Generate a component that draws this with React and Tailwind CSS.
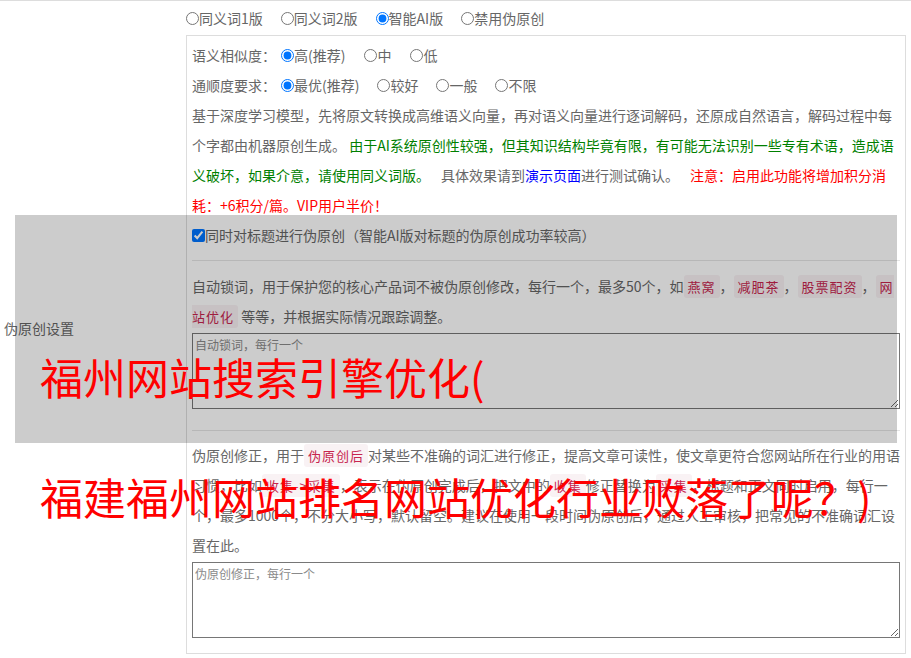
import React from "react";

const Code = ({ children }) => (
  <code className="rounded-[3px] bg-[#f9f2f4] px-[4px] py-[2px] text-[13px] leading-[14px] tracking-[1px] text-[#c7254e] font-['Noto_Sans_CJK_SC',sans-serif] [box-decoration-break:slice]">
    {children}
  </code>
);

const Radio = ({ name, label, checked }) => (
  <label className="flex items-center">
    <input
      type="radio"
      name={name}
      defaultChecked={checked}
      className="m-0 h-[13px] w-[13px]"
    />
    <span>{label}</span>
  </label>
);

const Gap = () => <span className="inline-block w-[11px]" />;

export default function App() {
  return (
    <div className="relative h-[658px] w-[911px] overflow-hidden bg-white font-['Noto_Sans_CJK_SC',sans-serif] text-[14px] text-[#666]">
      <div className="flex border-t border-[#ddd]">
        <div className="flex w-[186px] shrink-0 items-center pl-[4px] pb-[4px]">伪原创设置</div>
        <div className="flex-1 pb-[5px] pr-[5px] pt-[2px]">
          <div className="flex h-[30px] items-center gap-[18px]">
            <Radio name="ver" label="同义词1版" />
            <Radio name="ver" label="同义词2版" />
            <Radio name="ver" label="智能AI版" checked />
            <Radio name="ver" label="禁用伪原创" />
          </div>
          <div className="mt-[2px] border border-[#ddd] px-[5px] pb-[15px] pt-[4px] leading-[30px]">
            <div className="flex h-[30px] items-center">
              <span>语义相似度：</span>
              <div className="ml-[5px] flex items-center gap-[19px]">
                <Radio name="sim" label="高(推荐)" checked />
                <Radio name="sim" label="中" />
                <Radio name="sim" label="低" />
              </div>
            </div>
            <div className="flex h-[30px] items-center">
              <span>通顺度要求：</span>
              <div className="ml-[5px] flex items-center gap-[18px]">
                <Radio name="flu" label="最优(推荐)" checked />
                <Radio name="flu" label="较好" />
                <Radio name="flu" label="一般" />
                <Radio name="flu" label="不限" />
              </div>
            </div>
            <p>
              基于深度学习模型，先将原文转换成高维语义向量，再对语义向量进行逐词解码，还原成自然语言，解码过程中每个字都由机器原创生成。{" "}
              <span className="text-[#008000]">
                由于AI系统原创性较强，但其知识结构毕竟有限，有可能无法识别一些专有术语，造成语义破坏，如果介意，请使用同义词版。
              </span>
              <Gap />
              具体效果请到<span className="text-[#0000ff]">演示页面</span>进行测试确认。
              <Gap />
              <span className="text-[#ff0000]">注意：启用此功能将增加积分消耗：+6积分/篇。VIP用户半价！</span>
            </p>
            <label className="flex h-[30px] items-center">
              <input type="checkbox" defaultChecked className="m-0 h-[13px] w-[13px]" />
              <span>同时对标题进行伪原创（智能AI版对标题的伪原创成功率较高）</span>
            </label>
            <div className="my-[10px] h-px bg-[#e5e5e5]" />
            <p>
              自动锁词，用于保护您的核心产品词不被伪原创修改，每行一个，最多50个，如<Code>燕窝</Code>，<Code>减肥茶</Code>，<Code>股票配资</Code>，<Code>网站优化</Code> 等等，并根据实际情况跟踪调整。
            </p>
            <textarea
              placeholder="自动锁词，每行一个"
              className="mt-[2px] block h-[76px] w-full rounded-none border border-[#767676] p-[2px] font-['Noto_Sans_CJK_SC',sans-serif] text-[12px] leading-[17px] text-[#333] outline-none placeholder:text-[#8a8a8a]"
            />
            <div className="mb-[9px] mt-[21px] h-px bg-[#e5e5e5]" />
            <p>
              伪原创修正，用于<Code>伪原创后</Code>对某些不准确的词汇进行修正，提高文章可读性，使文章更符合您网站所在行业的用语习惯，比如<Code>收集-&gt;采集</Code>，表示在伪原创完成后，把文中的<Code>收集</Code>修正替换为<Code>采集</Code>，标题和正文同时启用，每行一个，最多1000个，不分大小写，默认留空。建议在使用一段时间伪原创后，通过人工审核，把常见的不准确词汇设置在此。
            </p>
            <textarea
              placeholder="伪原创修正，每行一个"
              className="mt-[2px] block h-[76px] w-full rounded-none border border-[#767676] p-[2px] font-['Noto_Sans_CJK_SC',sans-serif] text-[12px] leading-[17px] text-[#333] outline-none placeholder:text-[#8a8a8a]"
            />
          </div>
        </div>
      </div>

      <div className="absolute left-[15px] top-[215px] h-[228px] w-[882px] bg-black/20" />
      <div className="absolute left-[40px] top-[354px] whitespace-nowrap text-[43px] leading-[44px] text-[#ff0000]">
        福州网站搜索引擎优化(
      </div>
      <div className="absolute left-[40px] top-[474px] whitespace-nowrap text-[43px] leading-[44px] text-[#ff0000]">
        福建福州网站排名网站优化行业败落了呢？)
      </div>
    </div>
  );
}
